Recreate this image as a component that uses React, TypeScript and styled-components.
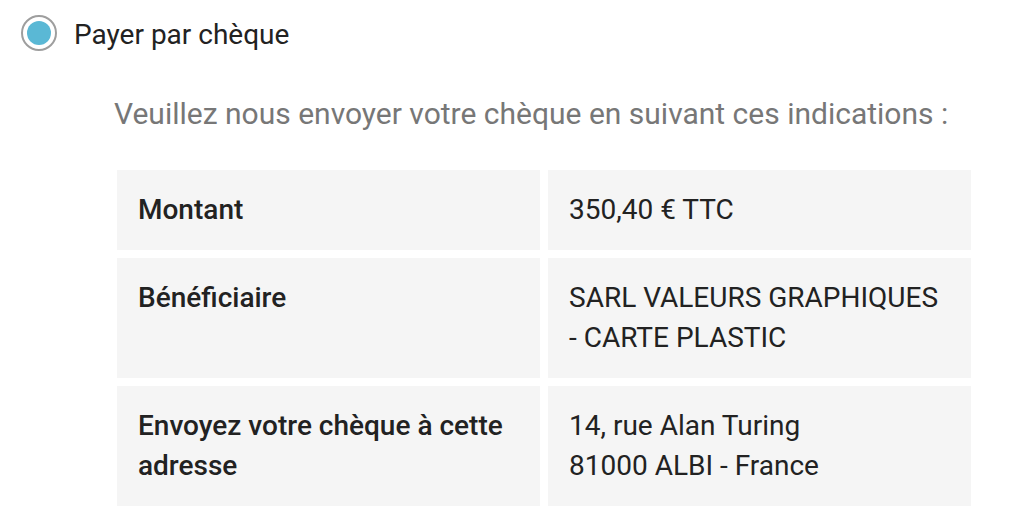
import React from "react";
import styled, { createGlobalStyle } from "styled-components";

const Global = createGlobalStyle`
  html, body { margin: 0; padding: 0; background: #ffffff; }
  body { font-family: Roboto, "Liberation Sans", Arial, sans-serif; }
`;

const Page = styled.div`
  width: 1010px;
  height: 532px;
  overflow: hidden;
  background: #fff;
`;

const RadioRow = styled.label`
  display: flex;
  align-items: flex-start;
  gap: 17px;
  padding: 15px 0 0 21px;
  height: 37px;
  cursor: pointer;
`;

const RadioOuter = styled.span`
  box-sizing: border-box;
  width: 36px;
  height: 36px;
  border-radius: 50%;
  border: 2px solid #9e9e9e;
  display: flex;
  align-items: center;
  justify-content: center;
  background: #fff;
`;

const RadioDot = styled.span`
  width: 24px;
  height: 24px;
  border-radius: 50%;
  background: #5ab8d5;
`;

const RadioLabel = styled.span`
  font-size: 28px;
  color: #222222;
  line-height: 36px;
  padding-top: 2px;
`;

const Intro = styled.p`
  margin: 44px 0 0 114px;
  font-size: 30px;
  line-height: 36px;
  color: #777777;
`;

const Grid = styled.div`
  display: grid;
  grid-template-columns: 423px 423px;
  gap: 8px;
  margin: 38px 0 0 117px;
`;

const Cell = styled.div<{ $head?: boolean }>`
  background: #f5f5f5;
  padding: 20px 21px;
  font-size: 28px;
  line-height: 40px;
  color: #222222;
  font-weight: ${(p) => (p.$head ? 500 : 400)};
`;

const rows: [string, React.ReactNode][] = [
  ["Montant", "350,40 € TTC"],
  ["Bénéficiaire", "SARL VALEURS GRAPHIQUES - CARTE PLASTIC"],
  [
    "Envoyez votre chèque à cette adresse",
    <>
      14, rue Alan Turing
      <br />
      81000 ALBI - France
    </>,
  ],
];

export default function App() {
  return (
    <Page>
      <Global />
      <RadioRow>
        <RadioOuter>
          <RadioDot />
        </RadioOuter>
        <RadioLabel>Payer par chèque</RadioLabel>
      </RadioRow>
      <Intro>Veuillez nous envoyer votre chèque en suivant ces indications :</Intro>
      <Grid>
        {rows.map(([k, v], i) => (
          <React.Fragment key={i}>
            <Cell $head>{k}</Cell>
            <Cell>{v}</Cell>
          </React.Fragment>
        ))}
      </Grid>
    </Page>
  );
}
